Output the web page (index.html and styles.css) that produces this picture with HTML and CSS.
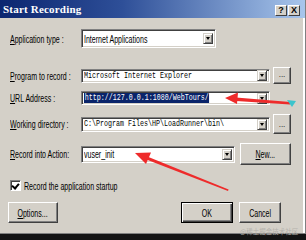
FILE: index.html
```html
<!DOCTYPE html>
<html lang="en">
<head>
    <meta charset="UTF-8">
    <meta name="viewport" content="width=device-width, initial-scale=1.0">
    <title>Start Recording</title>
    <link rel="stylesheet" href="styles.css">
</head>
<body>
<div class="window">
    <div class="titlebar">
        <span class="title">Start Recording</span>
        <div class="tb-buttons">
            <span class="tb-btn">?</span>
            <span class="tb-btn">X</span>
        </div>
    </div>

    <div class="content">
        <div class="row row-app">
            <div class="lbl"><span><u>A</u>pplication type :</span></div>
            <div class="combo combo-app">
                <span class="val sans">Internet Applications</span>
                <span class="drop"></span>
            </div>
        </div>

        <div class="row row-program">
            <div class="lbl"><span><u>P</u>rogram to record :</span></div>
            <div class="combo combo-wide">
                <span class="val mono">Microsoft Internet Explorer</span>
                <span class="drop"></span>
            </div>
            <button class="btn btn-dots">...</button>
        </div>

        <div class="row row-url">
            <div class="lbl"><span><u>U</u>RL Address :</span></div>
            <div class="combo combo-wide">
                <span class="val mono selected">http://127.0.0.1:1080/WebTours/</span>
                <span class="drop"></span>
            </div>
        </div>

        <div class="row row-dir">
            <div class="lbl"><span><u>W</u>orking directory :</span></div>
            <div class="combo combo-wide combo-dir">
                <span class="val mono">C:\Program Files\HP\LoadRunner\bin\</span>
                <span class="drop"></span>
            </div>
            <button class="btn btn-dots btn-dots-tall">...</button>
        </div>

        <div class="row row-action">
            <div class="lbl"><span><u>R</u>ecord into Action:</span></div>
            <div class="combo combo-action">
                <span class="val sans">vuser_init</span>
                <span class="drop"></span>
            </div>
            <button class="btn btn-new"><span><u>N</u>ew...</span></button>
        </div>

        <div class="row row-check">
            <span class="checkbox"></span>
            <span class="check-text"><span>Record the application startup</span></span>
        </div>

        <div class="row row-buttons">
            <button class="btn btn-options"><span><u>O</u>ptions...</span></button>
            <div class="btn-group">
                <button class="btn btn-ok"><span>OK</span></button>
                <button class="btn btn-cancel"><span>Cancel</span></button>
            </div>
        </div>
    </div>

    <!-- annotation arrows drawn over the dialog -->
    <svg class="arrows" width="306" height="240" viewBox="0 0 306 240">
        <polygon fill="#ee2b2b" points="290,102 290,104.5 236,101 236,97.5"/>
        <polygon fill="#ee2b2b" points="225,98 238,92.5 237,104"/>
        <polygon fill="#3cc4cc" points="287,100 296,101 292,107"/>
        <polygon fill="#ee2b2b" points="146,156 145,159 228,191 228.6,189.6"/>
        <polygon fill="#ee2b2b" points="135,153 151,152.5 146,164"/>
    </svg>

    <div class="watermark">@稀土掘金技术社区</div>
</div>
</body>
</html>
```

FILE: styles.css
```css
* {
    margin: 0;
    padding: 0;
    box-sizing: border-box;
}
body {
    width: 306px;
    height: 240px;
    overflow: hidden;
    background-color: #141414;
    font-family: "Liberation Sans", Arial, sans-serif;
}
.window {
    position: relative;
    width: 306px;
    height: 234px;
    background-color: #d4d0c8;
    border-bottom: 1px solid #808080;
    border-right: 1px solid #808080;
    box-shadow: inset -2px 0 #ffffff;
}

/* title bar */
.titlebar {
    height: 18px;
    display: flex;
    align-items: center;
    justify-content: space-between;
    padding: 0 5px 0 3px;
    background: linear-gradient(to right, #0c2670 0%, #2e4f98 40%, #a8c6ec 100%);
}
.title {
    display: inline-block;
    color: #fff;
    font-family: "Liberation Serif", serif;
    font-weight: bold;
    font-size: 11px;
    letter-spacing: 0.2px;
    white-space: nowrap;
}
.tb-buttons {
    display: flex;
    gap: 1px;
    margin-top: 2px;
}
.tb-btn {
    width: 12px;
    height: 11px;
    display: flex;
    align-items: center;
    justify-content: center;
    font-size: 9px;
    font-weight: bold;
    color: #000;
    background-color: #d4d0c8;
    border: 1px solid;
    border-color: #fff #404040 #404040 #fff;
}

/* form rows */
.content {
    display: flex;
    flex-direction: column;
    padding-top: 11px;
}
.row {
    display: flex;
    align-items: center;
    padding-left: 10px;
}
.row-app { height: 19px; }
.row-program { height: 17px; margin-top: 19px; }
.row-url { height: 14px; margin-top: 7px; }
.row-dir { height: 20px; margin-top: 9px; }
.row-action { height: 22px; margin-top: 9px; }
.row-check { height: 11px; margin-top: 15px; }
.row-buttons {
    height: 21px;
    margin-top: 11px;
    padding-left: 8px;
    padding-right: 24px;
    justify-content: space-between;
}

.lbl {
    width: 71px;
    flex-shrink: 0;
    font-size: 11px;
    color: #000;
    white-space: nowrap;
}
.lbl span,
.check-text span,
.btn span,
.val.sans {
    display: inline-block;
    transform: scaleX(0.64);
    transform-origin: left center;
    white-space: nowrap;
}

/* combo boxes */
.combo {
    position: relative;
    display: flex;
    align-items: center;
    justify-content: space-between;
    height: 14px;
    background-color: #fff;
    border: 1px solid;
    border-color: #808080 #fff #fff #808080;
    box-shadow: inset 1px 1px #404040, inset -1px -1px #d4d0c8;
    padding: 0 2px 0 2px;
    overflow: hidden;
}
.combo-app { width: 135px; height: 19px; }
.combo-wide { width: 189px; }
.combo-dir { height: 15px; }
.combo-action { width: 154px; height: 17px; }

.val {
    font-size: 11px;
    color: #000;
    white-space: nowrap;
}
.val.mono {
    display: inline-block;
    font-family: "Liberation Mono", monospace;
    font-size: 9px;
    transform: scaleX(0.74);
    transform-origin: left center;
}
.val.selected {
    background-color: #0a246a;
    color: #fff;
    padding: 0 1px;
}
.drop {
    position: absolute;
    right: 2px;
    top: 50%;
    width: 10px;
    height: 11px;
    margin-top: -5.5px;
    background-color: #d4d0c8;
    border: 1px solid;
    border-color: #d4d0c8 #404040 #404040 #d4d0c8;
    box-shadow: inset 1px 1px #fff, inset -1px -1px #808080;
}
.drop::after {
    content: "";
    position: absolute;
    left: 2px;
    top: 3px;
    border-left: 2.5px solid transparent;
    border-right: 2.5px solid transparent;
    border-top: 3px solid #000;
}

/* push buttons */
.btn {
    display: flex;
    align-items: center;
    justify-content: center;
    height: 21px;
    background-color: #d4d0c8;
    border: 1px solid;
    border-color: #fff #404040 #404040 #fff;
    box-shadow: inset -1px -1px #808080;
    font-family: "Liberation Sans", Arial, sans-serif;
    font-size: 11px;
    color: #000;
}
.btn span { transform-origin: center; }
.btn-dots {
    width: 18px;
    height: 17px;
    margin-left: 3px;
    font-size: 8px;
    align-items: flex-end;
    padding-bottom: 4px;
}
.btn-dots-tall { height: 20px; }
.btn-new {
    width: 51px;
    height: 22px;
    margin-left: 5px;
}
.btn-options { width: 50px; }
.btn-group {
    display: flex;
    gap: 6px;
}
.btn-ok {
    width: 52px;
    border: 1px solid #000;
    box-shadow: inset 1px 1px #fff, inset -1px -1px #404040, inset -2px -2px #808080;
}
.btn-cancel { width: 42px; }

/* checkbox */
.checkbox {
    position: relative;
    width: 11px;
    height: 11px;
    background-color: #fff;
    border: 1px solid;
    border-color: #808080 #fff #fff #808080;
    box-shadow: inset 1px 1px #404040;
}
.checkbox::after {
    content: "";
    position: absolute;
    left: 2px;
    top: 1px;
    width: 3px;
    height: 5px;
    border-right: 2px solid #000;
    border-bottom: 2px solid #000;
    transform: rotate(40deg);
}
.check-text {
    margin-left: 3px;
    font-size: 11px;
    color: #000;
}

/* overlays */
.arrows {
    position: absolute;
    left: 0;
    top: 0;
    pointer-events: none;
}
.watermark {
    position: absolute;
    left: 240px;
    top: 226px;
    font-family: "Noto Sans CJK SC", sans-serif;
    font-size: 6.5px;
    color: #b4b2ac;
    white-space: nowrap;
}
```
